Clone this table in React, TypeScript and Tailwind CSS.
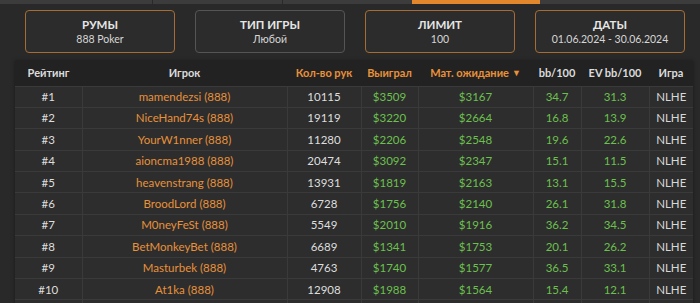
import { useState } from "react"

type Row = {
    rank: number
    player: string
    hands: number
    won: number
    ev: number
    bb: string
    evbb: string
    game: string
}

const rows: Row[] = [
    { rank: 1, player: "mamendezsi", hands: 10115, won: 3509, ev: 3167, bb: "34.7", evbb: "31.3", game: "NLHE" },
    { rank: 2, player: "NiceHand74s", hands: 19119, won: 3220, ev: 2664, bb: "16.8", evbb: "13.9", game: "NLHE" },
    { rank: 3, player: "YourW1nner", hands: 11280, won: 2206, ev: 2548, bb: "19.6", evbb: "22.6", game: "NLHE" },
    { rank: 4, player: "aioncma1988", hands: 20474, won: 3092, ev: 2347, bb: "15.1", evbb: "11.5", game: "NLHE" },
    { rank: 5, player: "heavenstrang", hands: 13931, won: 1819, ev: 2163, bb: "13.1", evbb: "15.5", game: "NLHE" },
    { rank: 6, player: "BroodLord", hands: 6728, won: 1756, ev: 2140, bb: "26.1", evbb: "31.8", game: "NLHE" },
    { rank: 7, player: "M0neyFeSt", hands: 5549, won: 2010, ev: 1916, bb: "36.2", evbb: "34.5", game: "NLHE" },
    { rank: 8, player: "BetMonkeyBet", hands: 6689, won: 1341, ev: 1753, bb: "20.1", evbb: "26.2", game: "NLHE" },
    { rank: 9, player: "Masturbek", hands: 4763, won: 1740, ev: 1577, bb: "36.5", evbb: "33.1", game: "NLHE" },
    { rank: 10, player: "At1ka", hands: 12908, won: 1988, ev: 1564, bb: "15.4", evbb: "12.1", game: "NLHE" },
]

const filters = [
    { title: "РУМЫ", value: "888 Poker", active: true },
    { title: "ТИП ИГРЫ", value: "Любой", active: false },
    { title: "ЛИМИТ", value: "100", active: true },
    { title: "ДАТЫ", value: "01.06.2024 - 30.06.2024", active: true },
]

const FilterCard = ({ title, value, active }: { title: string; value: string; active: boolean }) => (
    <button
        className={
            "w-[150px] h-[43px] rounded-[4px] border bg-[#2c2c2c] flex flex-col items-center justify-center leading-none " +
            (active ? "border-[#a56d35]" : "border-[#555555]")
        }
    >
        <span className="text-[11.5px] font-bold text-[#e6e6e6]">{title}</span>
        <span className="text-[10.5px] text-[#d6d6d6] mt-[4px]">{value}</span>
    </button>
)

const App = () => {
    const [sortBy] = useState("ev")

    return (
        <div className="w-[700px] h-[303px] overflow-hidden bg-[#292929] font-['Lato',sans-serif]">
            {/* top tabs strip */}
            <div className="flex h-[4px] bg-[#3c3c3c]">
                <div className="w-[153px] border-r border-[#2a2a2a]" />
                <div className="w-[130px] border-r border-[#2a2a2a]" />
                <div className="w-[129px]" />
                <div className="w-[128px] bg-[#e3872c]" />
                <div className="flex-1" />
            </div>

            {/* filters */}
            <div className="flex gap-[20px] pl-[25px] mt-[6px]">
                {filters.map(f => (
                    <FilterCard key={f.title} {...f} />
                ))}
            </div>

            {/* table */}
            <div className="ml-[15px] mt-[8px] w-[678px] shadow-[0_0_4px_rgba(0,0,0,0.4)]">
                <table className="w-full table-fixed border-collapse text-[11.5px]">
                    <colgroup>
                        <col className="w-[67px]" />
                        <col className="w-[205px]" />
                        <col className="w-[74px]" />
                        <col className="w-[57px]" />
                        <col className="w-[115px]" />
                        <col className="w-[48px]" />
                        <col className="w-[68px]" />
                        <col className="w-[44px]" />
                    </colgroup>
                    <thead>
                        <tr className="h-[25px] bg-[#222222] text-[11px]">
                            <th className="text-[#dcdcdc] font-bold">Рейтинг</th>
                            <th className="text-[#dcdcdc] font-bold">Игрок</th>
                            <th className="text-[#e8913a] font-bold">Кол-во рук</th>
                            <th className="text-[#e8913a] font-bold">Выиграл</th>
                            <th className="text-[#e8913a] font-bold">
                                Мат. ожидание
                                {sortBy === "ev" && <span className="ml-[3px] text-[9px] align-[1px]">▼</span>}
                            </th>
                            <th className="text-[#dcdcdc] font-bold">bb/100</th>
                            <th className="text-[#dcdcdc] font-bold">EV bb/100</th>
                            <th className="text-[#dcdcdc] font-bold">Игра</th>
                        </tr>
                    </thead>
                    <tbody className="bg-[#2d2d2d]">
                        {rows.map(r => (
                            <tr key={r.rank} className="h-[21.4px] border-t border-[#3a3a3a] text-center">
                                <td className="border-r border-[#3a3a3a] text-[#dedede]">#{r.rank}</td>
                                <td className="border-r border-[#3a3a3a] text-[#e8913a]">{r.player} (888)</td>
                                <td className="border-r border-[#3a3a3a] text-[#dedede]">{r.hands}</td>
                                <td className="border-r border-[#3a3a3a] text-[#6cc04d]">${r.won}</td>
                                <td className="border-r border-[#3a3a3a] text-[#6cc04d]">${r.ev}</td>
                                <td className="border-r border-[#3a3a3a] text-[#6cc04d]">{r.bb}</td>
                                <td className="border-r border-[#3a3a3a] text-[#6cc04d]">{r.evbb}</td>
                                <td className="text-[#d8d8d8]">{r.game}</td>
                            </tr>
                        ))}
                        <tr className="h-[21.4px] border-t border-[#3a3a3a]">
                            <td className="border-r border-[#3a3a3a]" />
                            <td className="border-r border-[#3a3a3a]" />
                            <td className="border-r border-[#3a3a3a]" />
                            <td className="border-r border-[#3a3a3a]" />
                            <td className="border-r border-[#3a3a3a]" />
                            <td className="border-r border-[#3a3a3a]" />
                            <td className="border-r border-[#3a3a3a]" />
                            <td />
                        </tr>
                    </tbody>
                </table>
            </div>
        </div>
    )
}

export default App
